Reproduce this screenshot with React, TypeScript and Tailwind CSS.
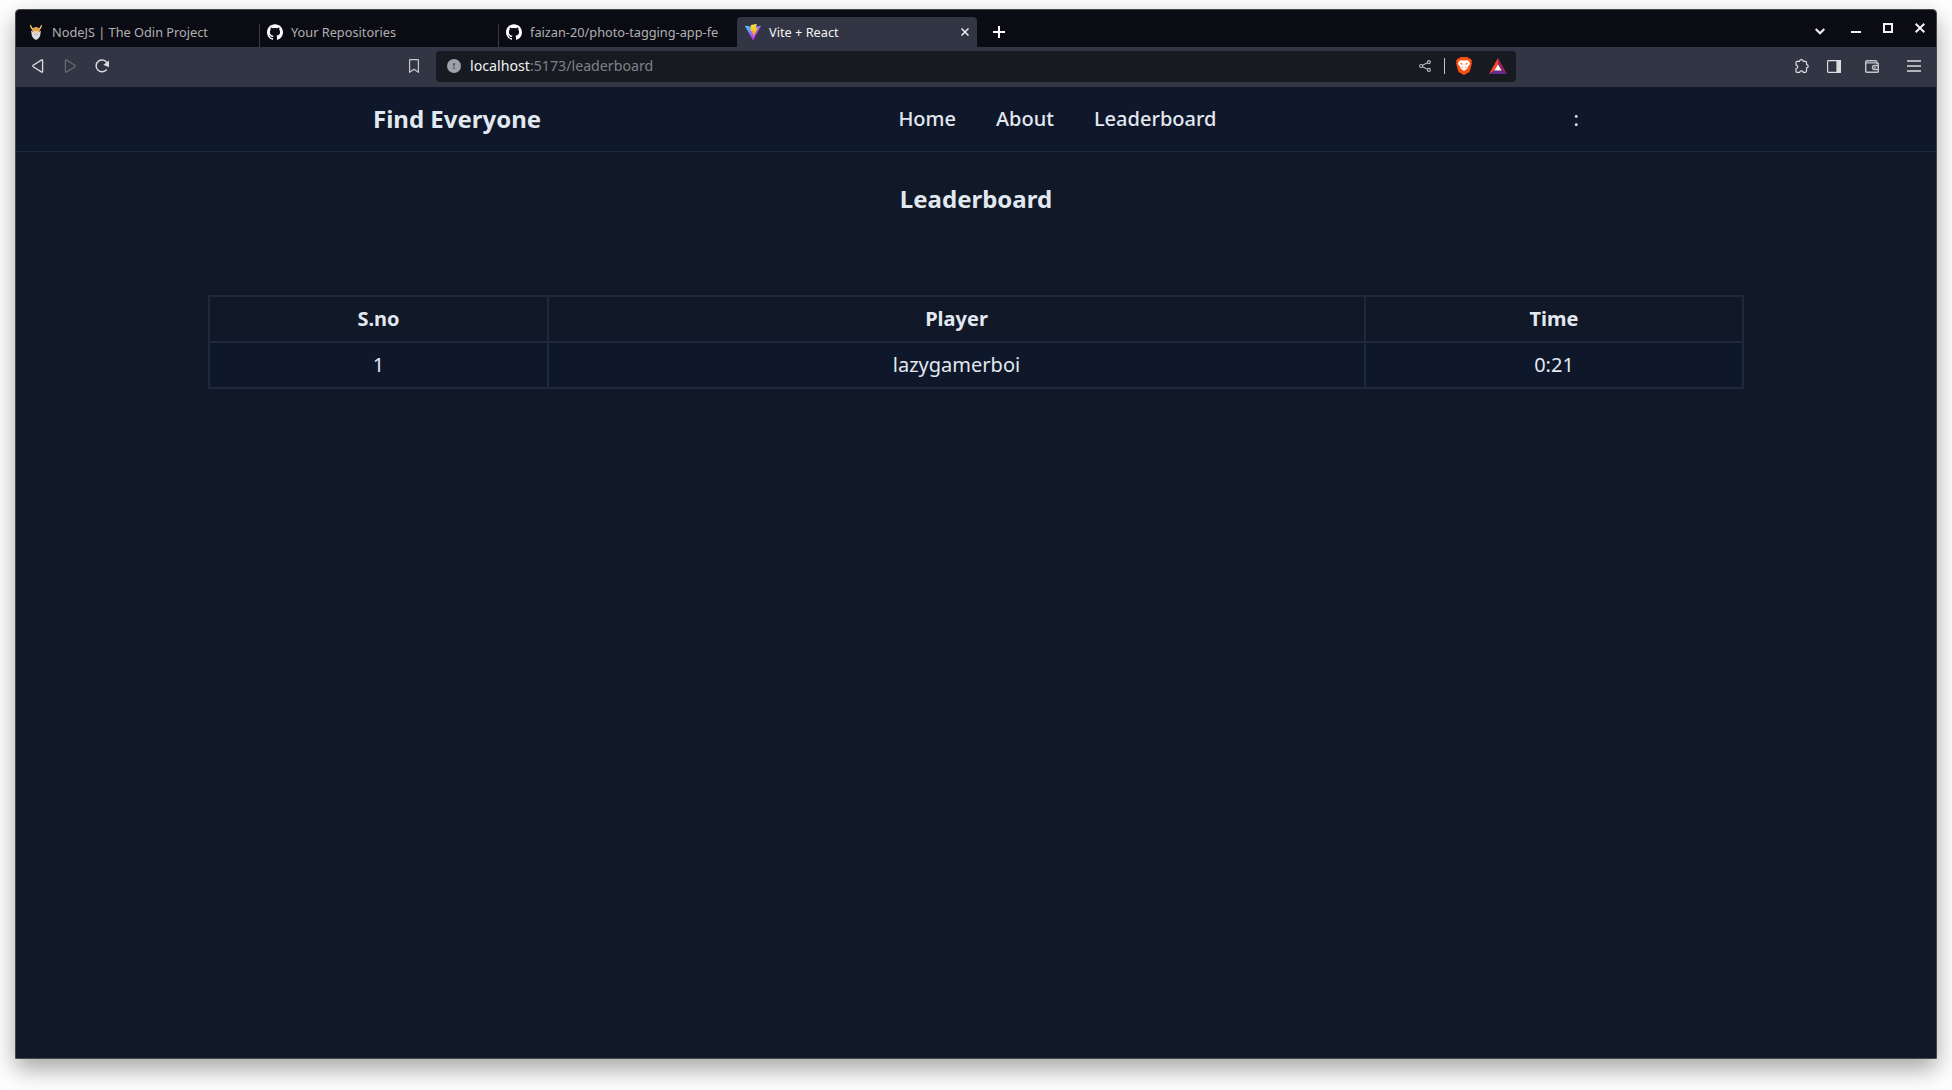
import type { ReactNode } from "react";
import { SiGithub } from "react-icons/si";

function OdinIcon() {
  return (
    <svg width="16" height="16" viewBox="0 0 16 16" fill="none">
      <path d="M2.4.6C2 2.500 2.600 4 4 5.400L4.500 9h7L12 5.400C13.400 4 14 2.500 13.600.600L11.400 4.200 8 2.800 4.600 4.200Z" fill="#e0a352" />
      <path d="M2.400.600C2 2.500 2.600 4 4 5.400L4.800 4.500ZM13.600.600C14 2.500 13.400 4 12 5.400L11.200 4.500Z" fill="#f0c078" />
      <path d="M3 6.200 4.500 8 8 7.200 11.500 8 13 6.200 12.200 11.500C11.500 13.800 10 15.200 8 16 6 15.200 4.500 13.800 3.800 11.500Z" fill="#d8dadd" />
      <path d="M5.200 7.300h5.600L10.200 9.700H5.800Z" fill="#e9c9a5" />
      <path d="M6 10.600h4" stroke="#a9adb3" strokeWidth=".6" />
    </svg>
  );
}

function ViteIcon() {
  return (
    <svg width="16" height="16" viewBox="0 0 256 257">
      <defs>
        <linearGradient id="viteBody" x1="-.828%" x2="57.636%" y1="7.652%" y2="78.411%">
          <stop offset="0%" stopColor="#41D1FF" />
          <stop offset="100%" stopColor="#BD34FE" />
        </linearGradient>
        <linearGradient id="viteBolt" x1="43.376%" x2="50.316%" y1="2.242%" y2="89.030%">
          <stop offset="0%" stopColor="#FFEA83" />
          <stop offset="8.333%" stopColor="#FFDD35" />
          <stop offset="100%" stopColor="#FFA800" />
        </linearGradient>
      </defs>
      <path fill="url(#viteBody)" d="M255.153 37.938L134.897 252.976c-2.483 4.44-8.862 4.466-11.382.048L.875 37.958c-2.746-4.814 1.371-10.646 6.827-9.67l120.385 21.517a6.537 6.537 0 0 0 2.322-.004l117.867-21.483c5.438-.991 9.574 4.796 6.877 9.62Z" />
      <path fill="url(#viteBolt)" d="M185.432.063L96.44 17.501a3.268 3.268 0 0 0-2.634 3.014l-5.474 92.456a3.268 3.268 0 0 0 3.997 3.378l24.777-5.718c2.318-.535 4.413 1.507 3.936 3.838l-7.361 36.047c-.495 2.426 1.782 4.5 4.151 3.78l15.304-4.649c2.372-.72 4.652 1.36 4.15 3.788l-11.698 56.621c-.732 3.542 3.979 5.473 5.943 2.437l1.313-2.028l72.516-144.72c1.215-2.423-.88-5.186-3.54-4.672l-25.505 4.922c-2.396.462-4.435-1.77-3.759-4.114l16.646-57.705c.677-2.35-1.37-4.583-3.769-4.113Z" />
    </svg>
  );
}

function BraveIcon() {
  return (
    <svg width="16" height="18" viewBox="0 0 16 18">
      <path d="M4.500 0h7L13 1.600l1.300-.1L16 3.800l-.5 1.500.4 1.200-2 7.600-1.300 1.500L8 18l-4.600-2.400-1.300-1.500-2-7.600.4-1.200L0 3.800 1.700 1.500 3 1.600Z" fill="#f9500f" />
      <path d="M8 3.400 9.600 3.200 12.200 3.500 14 6.200 13.300 8.200 11.400 10.200 11.600 11.400 10.200 12.300 8 14.300 5.800 12.300 4.400 11.400 4.600 10.200 2.700 8.200 2 6.200 3.800 3.500 6.400 3.200Z" fill="#fff" />
      <path d="M4 5.900 6.500 6.500 6.700 7.700 4.900 7.300ZM12 5.900 9.500 6.500 9.300 7.700 11.100 7.300ZM5.700 9.500 7.200 10.500 5.900 11.100ZM10.300 9.500 8.800 10.500 10.100 11.100Z" fill="#f9500f" />
    </svg>
  );
}

function BatIcon() {
  return (
    <svg width="18" height="16" viewBox="0 0 18 16">
      <path d="M9 0 0 16 5.500 12.500 9 6Z" fill="#ff4724" />
      <path d="M9 0 18 16 12.500 12.500 9 6Z" fill="#9e1f63" />
      <path d="M0 16h18L12.500 12.500h-7Z" fill="#662d91" />
      <path d="M9 6.200 12.600 12.600H5.400Z" fill="#fff" />
    </svg>
  );
}

function Tab({ icon, title, divider }: { icon: ReactNode; title: string; divider?: boolean }) {
  return (
    <div className="relative flex h-[30px] w-[239px] items-center gap-2 pl-2 text-[12.75px] text-[#b0b0b1]">
      {divider && <span className="absolute bottom-0 left-0 h-[23px] w-px bg-[#3d3c3e]" />}
      <span className="flex size-4 shrink-0 text-white">{icon}</span>
      <span className="pt-0.5 whitespace-nowrap">{title}</span>
    </div>
  );
}

function TabStrip() {
  return (
    <div className="flex h-[37px] items-end rounded-t-[3px] bg-[#0b0b14] pl-1">
      <Tab icon={<OdinIcon />} title="NodeJS | The Odin Project" />
      <Tab icon={<SiGithub size={16} />} title="Your Repositories" divider />
      <Tab icon={<SiGithub size={16} />} title="faizan-20/photo-tagging-app-fe" divider />
      <div className="flex h-[30px] w-[240px] items-center gap-2 rounded-t-[4px] bg-[#323543] pr-2 pl-2 text-[12.75px] text-[#f4f4f5]">
        <ViteIcon />
        <span className="flex-1 pt-0.5 whitespace-nowrap">Vite + React</span>
        <svg width="8" height="8" viewBox="0 0 8 8" stroke="#eee" strokeWidth="1.500">
          <path d="m.5.5 7 7m0-7-7 7" />
        </svg>
      </div>
      <svg className="mb-[9px] ml-4" width="12" height="12" viewBox="0 0 12 12" stroke="#fff" strokeWidth="2">
        <path d="M6 0v12M0 6h12" />
      </svg>
      <div className="mr-[11px] mb-[14px] ml-auto flex items-end">
        <svg className="mb-[-2px]" width="10" height="7" viewBox="0 0 10 7" fill="none" stroke="#f0f0f0" strokeWidth="2">
          <path d="m.7 1 4.300 4.300L9.300 1" />
        </svg>
        <span className="ml-[26px] h-[2px] w-[10px] bg-[#f0f0f0]" />
        <span className="ml-[22px] size-[10px] border-2 border-[#f0f0f0]" />
        <svg className="ml-[22px]" width="10" height="10" viewBox="0 0 10 10" stroke="#f0f0f0" strokeWidth="2">
          <path d="m.7.7 8.600 8.600m0-8.600L.7 9.300" />
        </svg>
      </div>
    </div>
  );
}

function Toolbar() {
  return (
    <div className="flex h-10 items-center bg-[#323543] pb-[2px] pl-4 text-[#dcdde0]">
      <svg width="12" height="14" viewBox="0 0 12 14" fill="none" stroke="currentColor" strokeWidth="1.300" strokeLinejoin="round">
        <path d="M9.700.9 1.200 6.300q-.8.700 0 1.400l8.500 5.400q.9.400.9-.7V1.600q0-1.100-.9-.7Z" />
      </svg>
      <svg className="ml-5 text-[#646672]" width="12" height="14" viewBox="0 0 12 14" fill="none" stroke="currentColor" strokeWidth="1.300" strokeLinejoin="round">
        <path d="m2.300.9 8.500 5.400q.8.700 0 1.400l-8.500 5.400q-.9.400-.9-.7V1.600q0-1.100.9-.7Z" />
      </svg>
      <svg className="ml-[19px]" width="14" height="14" viewBox="0 0 14 14" fill="none" stroke="currentColor" strokeWidth="1.400">
        <path d="M11.700 10.500A5.900 5.900 0 1 1 12.200 4" />
        <path d="M9.600 5.700 13.300 3v4.300Z" fill="currentColor" />
      </svg>
      <svg className="ml-[300px] text-[#c9cace]" width="10" height="14" viewBox="0 0 10 14" fill="none" stroke="currentColor" strokeWidth="1.200">
        <path d="M.6 1.200q0-.6.600-.6h7.600q.6 0 .6.600v12L5 10.200.6 13.200Z" />
      </svg>
      <div className="mt-px ml-[17px] flex h-[31px] w-[1080px] items-center rounded-[4px] bg-[#181a22] pr-[9px] pb-px pl-[11px]">
        <svg width="14" height="14" viewBox="0 0 14 14">
          <circle cx="7" cy="7" r="7" fill="#9da0aa" />
          <path d="M6.100 4h1.800v3.300H6.100ZM6.100 8.400h1.800v1.700H6.100Z" fill="#555863" />
        </svg>
        <span className="ml-[9px] flex-1 text-[14.2px] text-[#7f8186]">
          <span className="text-[#f1f1f2]">localhost</span>:5173/leaderboard
        </span>
        <svg width="12" height="12" viewBox="0 0 12 12" fill="none" stroke="#b9babd" strokeWidth="1.100">
          <path d="M3.500 5.200 8.500 2.700M3.500 6.800l5 2.500" />
          <circle cx="2.100" cy="6" r="1.500" />
          <circle cx="9.900" cy="2.100" r="1.500" />
          <circle cx="9.900" cy="9.900" r="1.500" />
        </svg>
        <span className="ml-[13px] h-4 w-px bg-[#c3c4c7]" />
        <span className="ml-[11px]"><BraveIcon /></span>
        <span className="ml-[17px]"><BatIcon /></span>
      </div>
      <div className="mr-[15px] ml-auto flex items-center">
        <svg width="14" height="14" viewBox="0 0 14 14" fill="none" stroke="currentColor" strokeWidth="1.200" strokeLinejoin="round">
          <path d="M1 3.300q0-1 1-1h2.600c0-2.300 3.600-2.300 3.600 0h2.300q1 0 1 1v2.300c2.300 0 2.300 3.200 0 3.200v3.300q0 1.200-1 1.200H8.200c0-2-3.400-2-3.400 0H2q-1 0-1-1V9.500c2.300 0 2.300-3.400 0-3.400Z" />
        </svg>
        <svg className="ml-[18px]" width="14" height="13" viewBox="0 0 14 13" fill="none" stroke="currentColor" strokeWidth="1.200">
          <rect x=".6" y=".6" width="12.800" height="11.800" rx=".8" />
          <path d="M10 .6h3.400v11.800H10Z" fill="currentColor" />
        </svg>
        <svg className="mt-px ml-6 text-[#c4c5ca]" width="14" height="13" viewBox="0 0 14 13" fill="none" stroke="currentColor" strokeWidth="1.400">
          <path d="M.7 2.200Q.7.700 2.200.700h8.300q1.200 0 1.200 1.100v1.200h.5q1.200 0 1.200 1.200v7q0 1.100-1.200 1.100H2.200q-1.500 0-1.500-1.500ZM1 2.900h10.700" />
          <path d="M13.400 5.500H9.500a2 2 0 0 0 0 4h3.900ZM9.200 7.500h1.600" />
        </svg>
        <svg className="ml-7" width="14" height="12" viewBox="0 0 14 12" stroke="currentColor" strokeWidth="1.300">
          <path d="M0 1h14M0 6h14M0 11h14" />
        </svg>
      </div>
    </div>
  );
}

const cell = "border-2 border-[#1e293b] py-2 text-center leading-7";

function Page() {
  return (
    <div className="flex-1 bg-[#111827] text-[#e2e8f0]">
      <nav className="border-b border-[#1e293b] bg-[#0f172a]">
        <div className="mx-auto flex h-16 w-[1536px] items-center justify-between px-[165px]">
          <span className="text-2xl font-bold">Find Everyone</span>
          <div className="flex gap-10 text-xl font-medium">
            <span>Home</span>
            <span>About</span>
            <span>Leaderboard</span>
          </div>
          <span className="text-xl">:</span>
        </div>
      </nav>
      <h1 className="pt-[31px] text-center text-2xl font-bold">Leaderboard</h1>
      <table className="mx-auto mt-20 w-[1534px] table-fixed border-collapse text-xl">
        <colgroup>
          <col className="w-[339px]" />
          <col className="w-[817px]" />
          <col className="w-[378px]" />
        </colgroup>
        <thead>
          <tr>
            <th className={cell}>S.no</th>
            <th className={cell}>Player</th>
            <th className={cell}>Time</th>
          </tr>
        </thead>
        <tbody>
          <tr className="bg-[#0f172a]">
            <td className={cell}>1</td>
            <td className={cell}>lazygamerboi</td>
            <td className={cell}>0:21</td>
          </tr>
        </tbody>
      </table>
    </div>
  );
}

export default function App() {
  return (
    <div className="h-[1090px] w-[1952px] overflow-hidden bg-white px-[15px] pt-[9px] font-['Noto_Sans',sans-serif]">
      <div className="flex h-[1050px] flex-col rounded-t-[4px] border border-[#47484c] shadow-[0_10px_24px_rgba(0,0,0,0.36)]">
        <TabStrip />
        <Toolbar />
        <Page />
      </div>
    </div>
  );
}
